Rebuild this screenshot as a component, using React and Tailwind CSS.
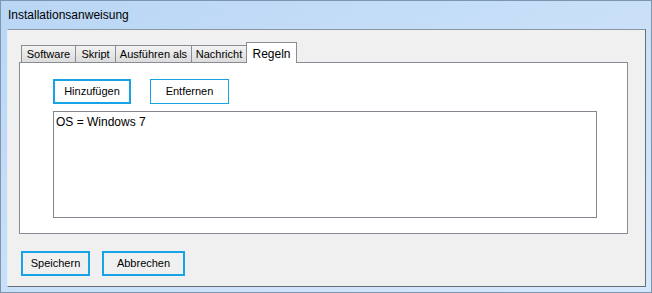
import React from 'react';

const tabs = ['Software', 'Skript', 'Ausführen als', 'Nachricht', 'Regeln'];
const tabWidths = ['w-[55px]', 'w-[41px]', 'w-[77px]', 'w-[56px]', 'w-[51px]'];

const Tab = ({ label, width, active }) => {
  if (active) {
    return (
      <div
        className={`${width} h-[21px] -mb-px -ml-px relative z-10 bg-white border border-b-0 border-[#898c95] flex items-start justify-center pt-[2px] text-black text-[12px]`}
      >
        {label}
      </div>
    );
  }
  return (
    <div
      className={`${width} h-[17px] border border-b-0 border-[#898c95] bg-gradient-to-b from-[#f2f2f2] to-[#dcdcdc] flex items-center justify-center -ml-px first:ml-0 text-black`}
    >
      {label}
    </div>
  );
};

const App = () => {
  return (
    <div
      className="w-[652px] h-[293px] flex flex-col bg-gradient-to-br from-[#b9d6f5] via-[#c9e0f8] to-[#d6e8fb] border border-[#7d95ae] text-[11px]"
      style={{ fontFamily: '"Liberation Sans", Arial, sans-serif' }}
    >
      {/* title bar */}
      <div className="h-[28px] flex items-center pl-[7px] text-[12px] text-black shrink-0">
        Installationsanweisung
      </div>

      {/* client area */}
      <div className="flex-1 ml-[6px] mr-[5px] mb-[5px] bg-[#f0f0f0] border border-[#656d77] border-l-[#e8eef5] border-t-[#8a95a2] flex flex-col pt-[12px] pl-[11px] pr-[17px]">
        {/* tab strip */}
        <div className="flex items-end h-[20px] pl-[2px]">
          {tabs.map((t, i) => (
            <Tab key={t} label={t} width={tabWidths[i]} active={t === 'Regeln'} />
          ))}
        </div>

        {/* tab panel */}
        <div className="h-[172px] bg-white border border-[#898c95] flex flex-col pt-[16px] pl-[33px]">
          <div className="flex gap-[19px]">
            <button className="w-[78px] h-[25px] border-2 border-[#18a3e6] bg-white text-black text-[11px]">
              Hinzufügen
            </button>
            <button className="w-[79px] h-[25px] border border-[#18a3e6] bg-white text-black text-[11px]">
              Entfernen
            </button>
          </div>
          <div className="mt-[7px] w-[544px] h-[107px] border border-[#828790] bg-white pl-[2px] pt-[1px] text-[12px] text-black">
            OS = Windows 7
          </div>
        </div>

        {/* bottom buttons */}
        <div className="flex gap-[12px] mt-[17px] pl-[2px]">
          <button className="w-[69px] h-[25px] border-2 border-[#18a3e6] bg-[#f0f0f0] text-black text-[11px]">
            Speichern
          </button>
          <button className="w-[83px] h-[25px] border-2 border-[#18a3e6] bg-[#f0f0f0] text-black text-[11px]">
            Abbrechen
          </button>
        </div>
      </div>
    </div>
  );
};

export default App;
